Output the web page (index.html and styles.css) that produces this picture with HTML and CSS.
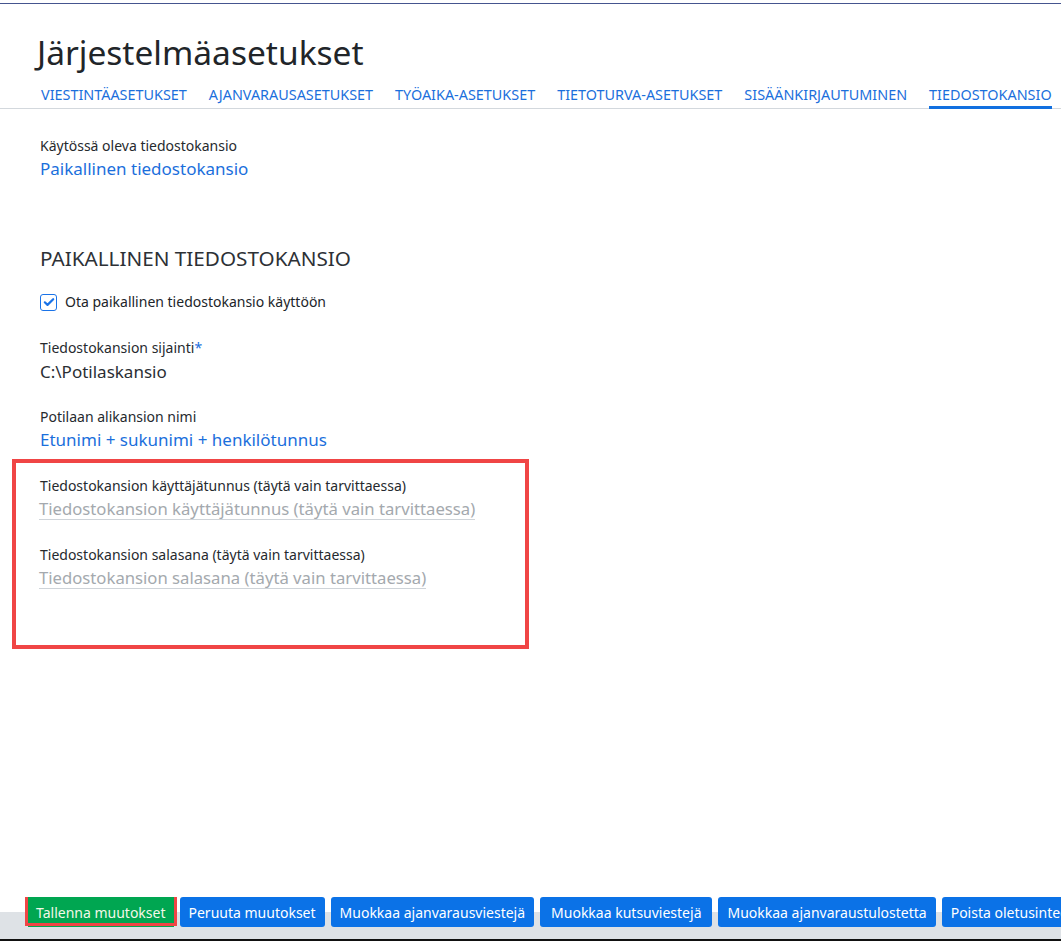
FILE: index.html
```html
<!DOCTYPE html>
<html lang="fi">
<head>
    <meta charset="UTF-8">
    <meta name="viewport" content="width=device-width, initial-scale=1.0">
    <title>Järjestelmäasetukset</title>
    <link rel="stylesheet" href="styles.css">
</head>
<body>
<div class="window">
    <header class="page-header">
        <h1 class="title">Järjestelmäasetukset</h1>
        <nav class="tabs">
            <a class="tab">Viestintäasetukset</a>
            <a class="tab">Ajanvarausasetukset</a>
            <a class="tab">Työaika-asetukset</a>
            <a class="tab">Tietoturva-asetukset</a>
            <a class="tab">Sisäänkirjautuminen</a>
            <a class="tab active">Tiedostokansio</a>
        </nav>
    </header>

    <main class="content">
        <div class="field">
            <div class="label">Käytössä oleva tiedostokansio</div>
            <div class="value link">Paikallinen tiedostokansio</div>
        </div>

        <h2 class="section-title">Paikallinen tiedostokansio</h2>

        <label class="check">
            <span class="check-box">
                <svg width="12" height="12" viewBox="0 0 12 12"><path d="M1.8 6.3l2.7 2.6L10.2 3.2" fill="none" stroke="#1a73e8" stroke-width="2.2" stroke-linecap="round" stroke-linejoin="round"/></svg>
            </span>
            Ota paikallinen tiedostokansio käyttöön
        </label>

        <div class="field">
            <div class="label">Tiedostokansion sijainti<span class="req">*</span></div>
            <div class="value">C:\Potilaskansio</div>
        </div>

        <div class="field">
            <div class="label">Potilaan alikansion nimi</div>
            <div class="value link">Etunimi + sukunimi + henkilötunnus</div>
        </div>

        <!-- korostettu alue -->
        <div class="highlight">
            <div class="field">
                <div class="label">Tiedostokansion käyttäjätunnus (täytä vain tarvittaessa)</div>
                <div class="input">Tiedostokansion käyttäjätunnus (täytä vain tarvittaessa)</div>
            </div>
            <div class="field">
                <div class="label">Tiedostokansion salasana (täytä vain tarvittaessa)</div>
                <div class="input">Tiedostokansion salasana (täytä vain tarvittaessa)</div>
            </div>
        </div>
    </main>

    <footer class="actions">
        <button class="btn btn-save">Tallenna muutokset</button>
        <button class="btn">Peruuta muutokset</button>
        <button class="btn">Muokkaa ajanvarausviestejä</button>
        <button class="btn btn-wide">Muokkaa kutsuviestejä</button>
        <button class="btn">Muokkaa ajanvaraustulostetta</button>
        <button class="btn">Poista oletusintegraatio</button>
    </footer>
</div>
</body>
</html>
```

FILE: styles.css
```css
html, body {
    margin: 0;
    padding: 0;
    height: 100%;
    background-color: #fff;
    font-family: "Noto Sans", "Open Sans", Arial, sans-serif;
    color: #212529;
    overflow: hidden;
}

.window {
    margin-top: 3px;
    height: calc(100% - 3px);
    border-top: 1px solid #45558f;
    display: flex;
    flex-direction: column;
    box-sizing: border-box;
}

.page-header {
    padding-top: 26px;
}

.title {
    margin: 0 0 0 37px;
    font-size: 33.5px;
    font-weight: 400;
    line-height: 44px;
    color: #212529;
}

.tabs {
    display: flex;
    padding-left: 41px;
    margin-top: 12px;
    border-bottom: 1px solid #d3d8dd;
    white-space: nowrap;
}

.tab {
    font-size: 14.4px;
    line-height: 18px;
    text-transform: uppercase;
    color: #1b6fdc;
    padding-bottom: 2px;
    margin-right: 22px;
    border-bottom: 3px solid transparent;
    margin-bottom: -1px;
}

.tab.active {
    border-bottom-color: #1270e0;
}

.content {
    flex: 1;
    padding: 27px 0 0 40px;
}

.field {
    margin-bottom: 23px;
}

.label {
    font-size: 14px;
    line-height: 19px;
    color: #262a2e;
}

.req {
    color: #1b6fdc;
}

.value {
    font-size: 17px;
    line-height: 24px;
    margin-top: 2px;
    color: #2a2e33;
}

.value.link {
    color: #1b6fdc;
}

.section-title {
    margin: 64px 0 21px;
    font-size: 20.7px;
    font-weight: 400;
    line-height: 26px;
    text-transform: uppercase;
    color: #2d3136;
}

.check {
    display: flex;
    align-items: center;
    font-size: 14px;
    line-height: 20px;
    margin-bottom: 26px;
}

.check-box {
    width: 15px;
    height: 15px;
    border: 1.5px solid #1a73e8;
    border-radius: 3px;
    display: flex;
    justify-content: center;
    align-items: center;
    margin-right: 8px;
}

.check + .field .value {
    margin-top: 3px;
}

.highlight {
    margin: -16px 0 0 -28px;
    width: 517px;
    height: 190px;
    border: 4px solid #f04545;
    padding: 13px 0 0 24px;
    box-sizing: border-box;
}

.highlight .field {
    margin-bottom: 25px;
}

.input {
    display: inline-block;
    margin: 4px 0 0 -1px;
    font-size: 16.7px;
    line-height: 20px;
    color: #a4a9ae;
    border-bottom: 1px solid #cfd4d9;
}

.actions {
    height: 44px;
    display: flex;
    gap: 6px;
    padding-left: 28px;
    white-space: nowrap;
    overflow: hidden;
    background: linear-gradient(to bottom, #fff 15px, #dee2e6 15px);
    border-bottom: 2px solid #111;
    box-sizing: border-box;
}

.btn {
    flex-shrink: 0;
    height: 30px;
    padding: 0 9px;
    border: none;
    border-radius: 3px;
    background-color: #0b72e7;
    color: #fff;
    font-family: "Noto Sans", "Open Sans", Arial, sans-serif;
    font-size: 14px;
    cursor: pointer;
}

.btn-wide {
    padding: 0 11px;
}

.btn-save {
    position: relative;
    padding: 0 8px;
    background-color: #00a651;
    border-radius: 0;
    color: #f4f8e8;
}

/* punainen korostus tallenna-napin ympärillä */
.btn-save::after {
    content: "";
    position: absolute;
    top: -4px;
    left: -3px;
    right: -3px;
    bottom: 1px;
    border: 3px solid #f04545;
}
```
